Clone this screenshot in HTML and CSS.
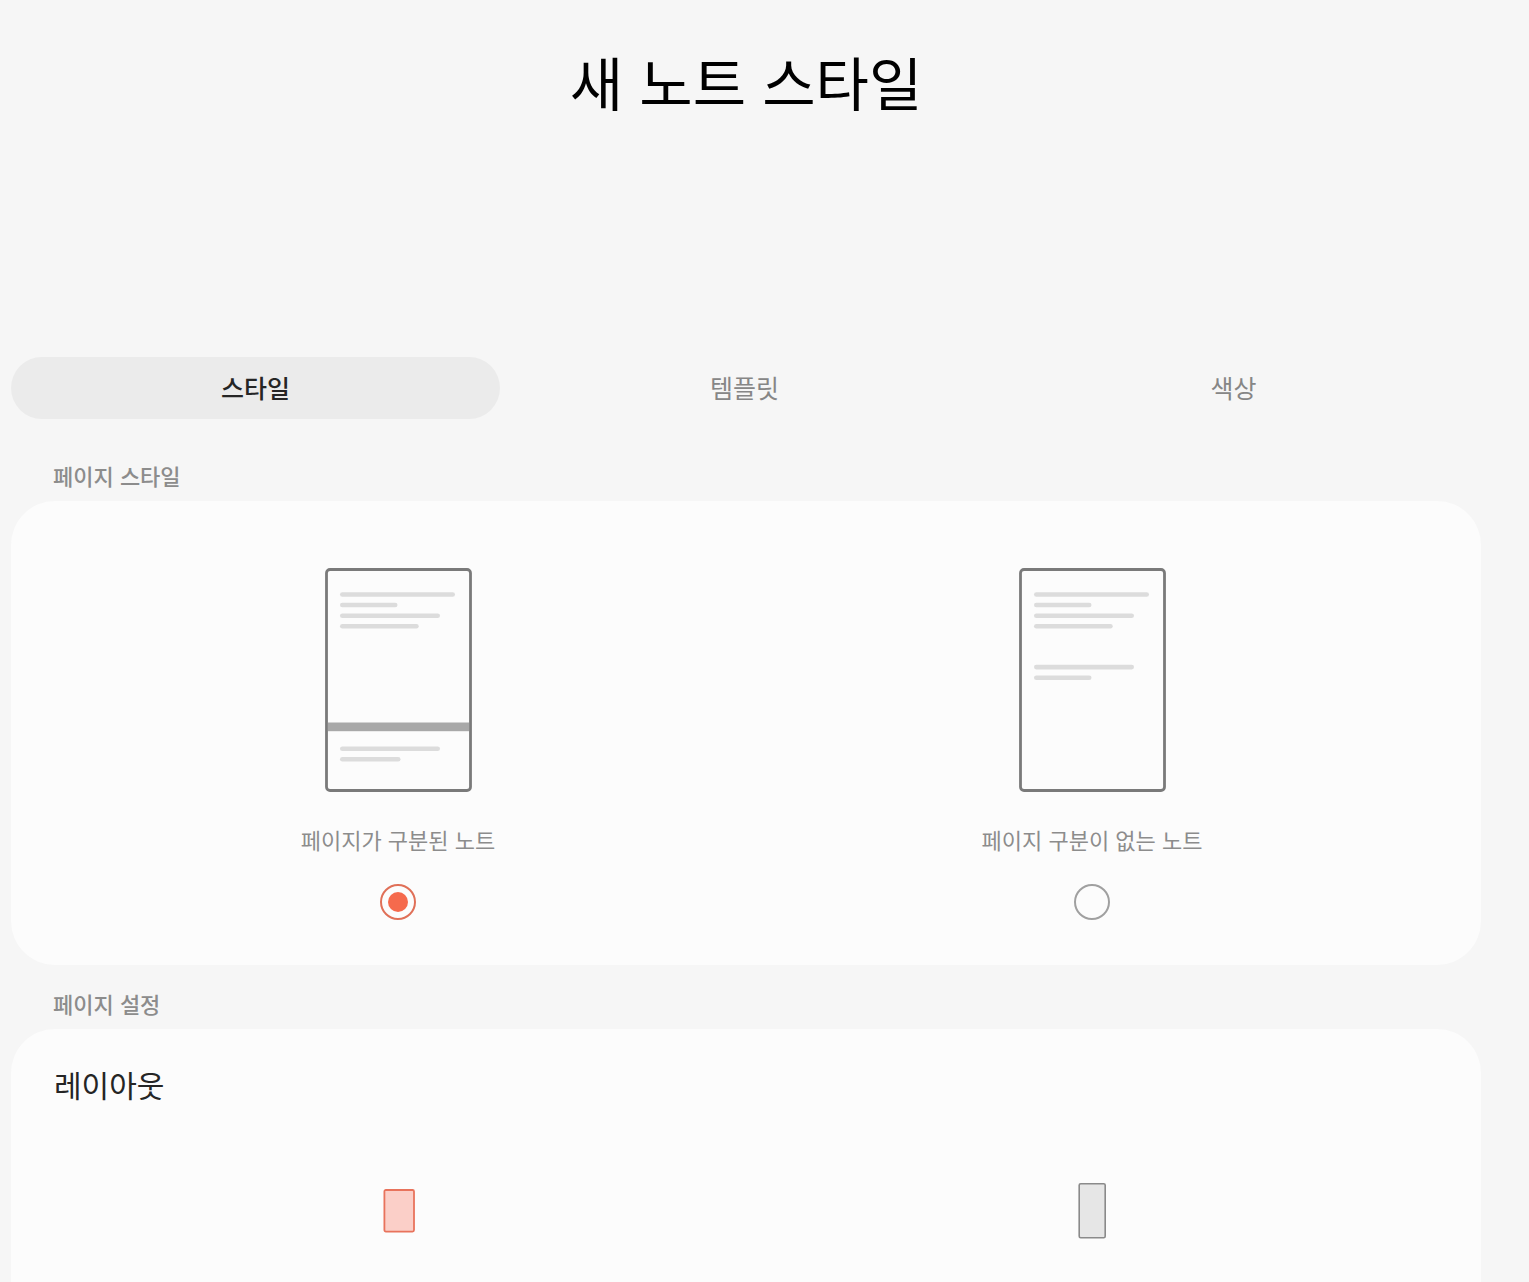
FILE: index.html
```html
<!DOCTYPE html>
<html lang="ko">
  <head>
    <meta charset="UTF-8" />
    <meta name="viewport" content="width=device-width, initial-scale=1.0" />
    <title>새 노트 스타일</title>
    <link rel="stylesheet" href="styles.css">
  </head>
  <body>
    <main class="container">
      <h1 class="page-title">새 노트 스타일</h1>

      <nav class="tabs">
        <button type="button" class="tab active">스타일</button>
        <button type="button" class="tab">템플릿</button>
        <button type="button" class="tab">색상</button>
      </nav>

      <h2 class="section-title">페이지 스타일</h2>
      <section class="card style-card">
        <div class="options">
          <label class="option" for="paged">
            <svg class="page-icon" width="148" height="224" viewBox="0 0 148 224" aria-hidden="true">
              <rect x="2.5" y="1.5" width="144" height="221" rx="3.5" fill="none" stroke="#7a7a7a" stroke-width="2.8" />
              <rect x="4" y="154.5" width="141" height="8.7" fill="#a8a8a8" />
              <g fill="#dcdcdc">
                <rect x="16" y="24.2" width="115" height="4.6" rx="2.3" />
                <rect x="16" y="34.7" width="57.5" height="4.6" rx="2.3" />
                <rect x="16" y="45.4" width="100" height="4.6" rx="2.3" />
                <rect x="16" y="56" width="78.7" height="4.6" rx="2.3" />
                <rect x="16" y="178.4" width="100" height="4.6" rx="2.3" />
                <rect x="16" y="189" width="60.5" height="4.6" rx="2.3" />
              </g>
            </svg>
            <span class="option-label">페이지가 구분된 노트</span>
            <input type="radio" class="radio" id="paged" name="page-style" checked />
          </label>

          <label class="option" for="endless">
            <svg class="page-icon" width="148" height="224" viewBox="0 0 148 224" aria-hidden="true">
              <rect x="2.5" y="1.5" width="144" height="221" rx="3.5" fill="none" stroke="#7a7a7a" stroke-width="2.8" />
              <g fill="#dcdcdc">
                <rect x="16" y="24.2" width="115" height="4.6" rx="2.3" />
                <rect x="16" y="34.7" width="57.5" height="4.6" rx="2.3" />
                <rect x="16" y="45.4" width="100" height="4.6" rx="2.3" />
                <rect x="16" y="56" width="78.7" height="4.6" rx="2.3" />
                <rect x="16" y="96.8" width="100" height="4.6" rx="2.3" />
                <rect x="16" y="107.4" width="57.5" height="4.6" rx="2.3" />
              </g>
            </svg>
            <span class="option-label">페이지 구분이 없는 노트</span>
            <input type="radio" class="radio" id="endless" name="page-style" />
          </label>
        </div>
      </section>

      <h2 class="section-title">페이지 설정</h2>
      <section class="card layout-card">
        <h3 class="card-title">레이아웃</h3>
        <div class="options layouts">
          <svg width="34" height="44" viewBox="0 0 34 44" aria-hidden="true">
            <rect x="3.4" y="1" width="29.6" height="41.6" rx="1.5" fill="#fbcfc8" stroke="#e8735c" stroke-width="1.8" />
          </svg>
          <svg width="28" height="56" viewBox="0 0 28 56" aria-hidden="true">
            <rect x="1.2" y="0.8" width="26" height="54" rx="1.5" fill="#e6e6e6" stroke="#8a8a8a" stroke-width="1.6" />
          </svg>
        </div>
      </section>
    </main>
  </body>
</html>
```

FILE: styles.css
```css
* {
  box-sizing: border-box;
}
body {
  font-family: "Noto Sans CJK KR", sans-serif;
  background-color: #f6f6f6;
  color: #252525;
  margin: 0;
}
h1,
h2,
h3 {
  margin: 0;
}
.container {
  display: flex;
  flex-direction: column;
  min-height: 100vh;
  padding: 39px 48px 0 11px;
}
.page-title {
  margin-bottom: 234px;
  font-size: 58px;
  font-weight: 400;
  line-height: 84px;
  color: #000;
  text-align: center;
}

.tabs {
  display: grid;
  grid-template-columns: repeat(3, 1fr);
  padding-right: 3px;
  margin-bottom: 39px;
}
.tab {
  height: 62px;
  padding: 0 0 2px;
  border: none;
  border-radius: 31px;
  background: none;
  font-family: inherit;
  font-size: 25px;
  color: #868686;
  cursor: pointer;
}
.tab.active {
  background-color: #ebebeb;
  font-weight: 500;
  color: #252525;
}

.section-title {
  padding: 0 42px;
  margin-bottom: 9px;
  font-size: 22px;
  font-weight: 500;
  line-height: 34px;
  color: #8c8c8c;
}
.card {
  background-color: #fcfcfc;
  border-radius: 44px;
}
.style-card {
  padding: 67px 0 45px;
  margin-bottom: 21px;
}
.options {
  display: grid;
  grid-template-columns: 1fr 1fr;
  justify-items: center;
  padding: 0 42px 0 40px;
}
.option {
  display: flex;
  flex-direction: column;
  align-items: center;
  cursor: pointer;
}
.option-label {
  margin: 31px 0 29px;
  font-size: 22px;
  line-height: 32px;
  color: #8c8c8c;
}
.radio {
  appearance: none;
  display: grid;
  place-items: center;
  width: 36px;
  height: 36px;
  margin: 0;
  border: 2px solid #a0a0a0;
  border-radius: 50%;
  cursor: pointer;
}
.radio:checked {
  border-color: #e07058;
}
.radio:checked::before {
  content: "";
  width: 20px;
  height: 20px;
  border-radius: 50%;
  background-color: #f56a4d;
}

.layout-card {
  flex: 1;
  padding-top: 33px;
  border-radius: 44px 44px 0 0;
}
.card-title {
  padding: 0 43px;
  margin-bottom: 77px;
  font-size: 30px;
  font-weight: 400;
  line-height: 44px;
}
.layouts {
  align-items: center;
}
```
